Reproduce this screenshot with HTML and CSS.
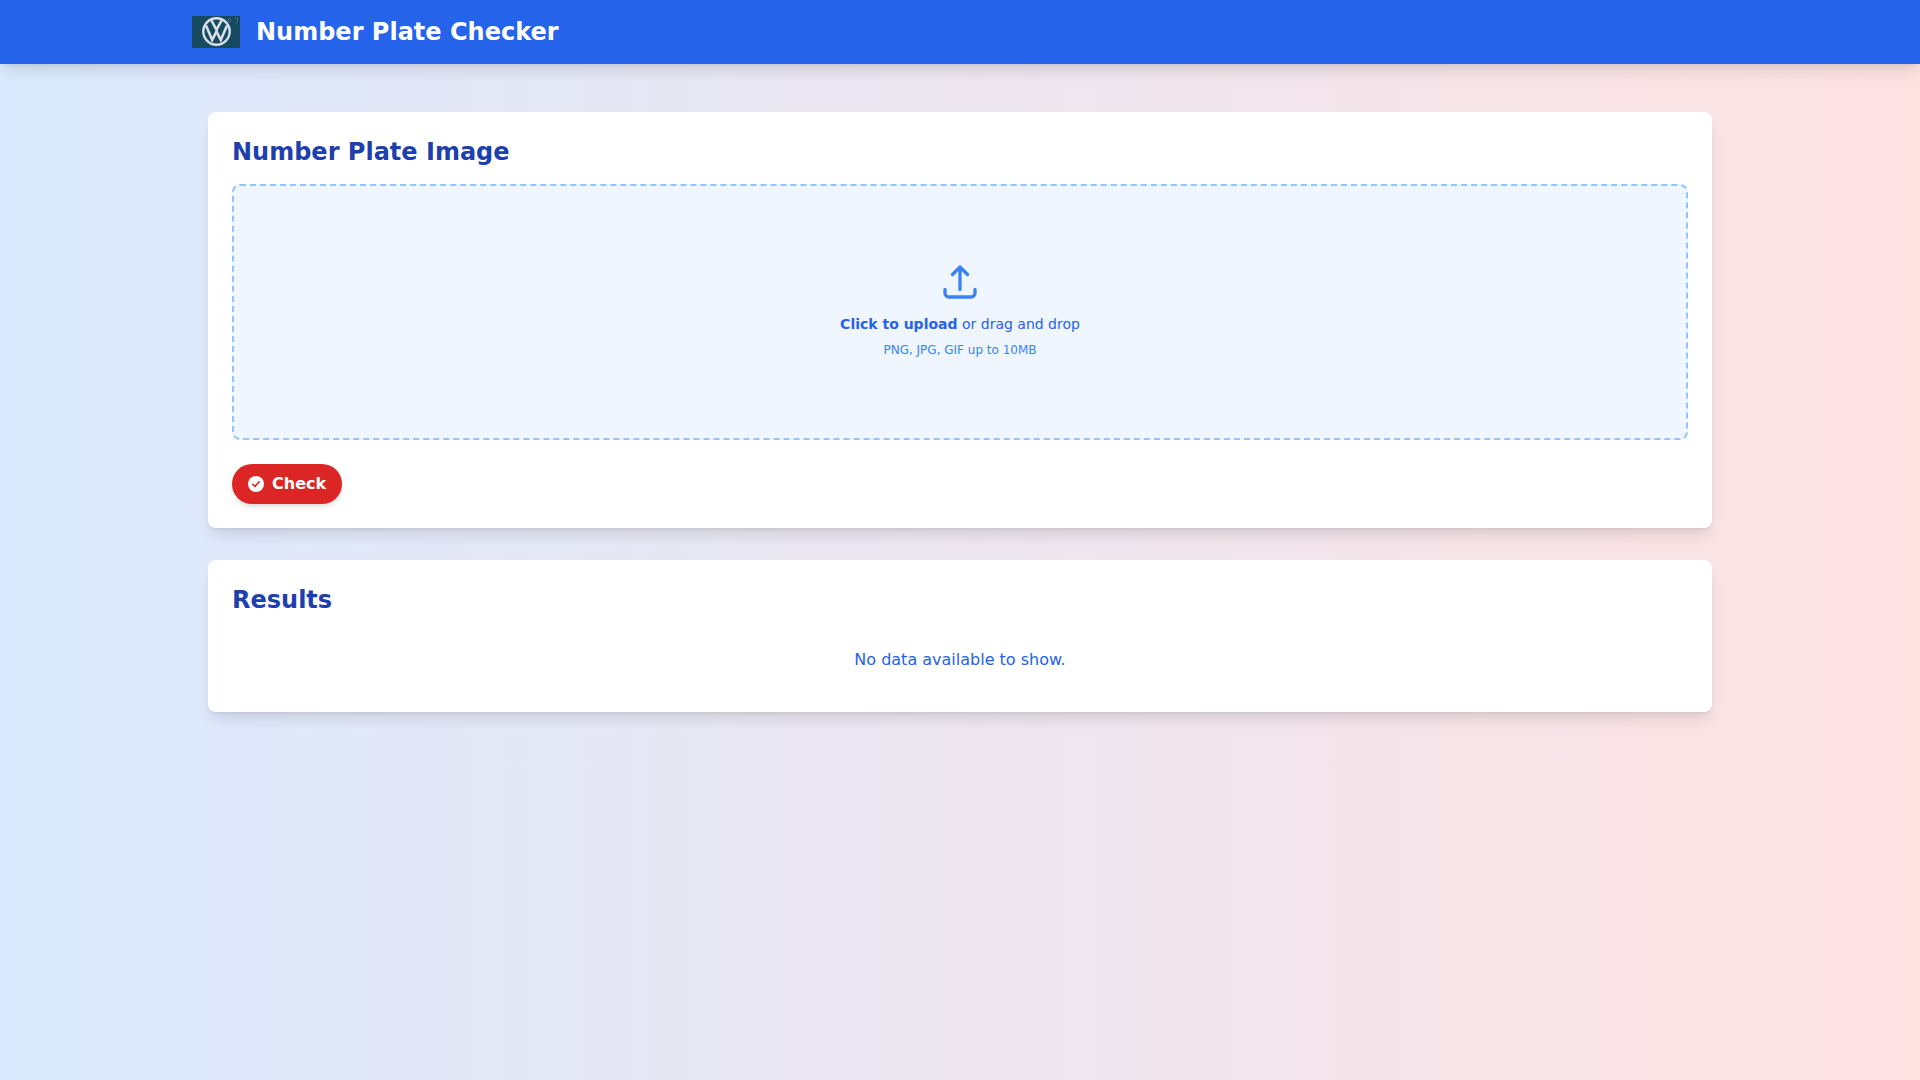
FILE: index.html
```html
<!DOCTYPE html>
<html lang="en">
<head>
<meta charset="utf-8">
<title>Number Plate Checker</title>
<link rel="stylesheet" href="styles.css">
</head>
<body>
<header class="topbar">
  <div class="topbar-inner">
    <svg class="logo" viewBox="0 0 48 32" width="48" height="32" aria-label="VW logo">
      <rect width="48" height="32" fill="#174a5f"/>
      <g fill="none" stroke="#d8dfe9">
        <circle cx="24.5" cy="15.5" r="13.2" stroke-width="2.4"/>
        <path d="M14 9.5 L20.2 24 L24.5 15.5 L28.8 24 L35 9.5" stroke-width="2.6"/>
        <path d="M19.2 4 L24.5 13.8 L29.8 4" stroke-width="2.6"/>
      </g>
      <g fill="#5f8fb0">
        <rect x="36" y="3" width="1" height="1"/>
        <rect x="38" y="3" width="1" height="1"/>
        <rect x="36" y="5" width="1" height="1"/>
        <rect x="38" y="5" width="1" height="1"/>
        <rect x="43" y="2" width="1" height="1"/>
        <rect x="45" y="2" width="1" height="1"/>
        <rect x="45" y="4" width="1" height="1"/>
        <rect x="44" y="6" width="1" height="1"/>
      </g>
    </svg>
    <h1 class="app-title">Number Plate Checker</h1>
  </div>
</header>
<main class="content">
  <section class="card">
    <h2 class="card-title">Number Plate Image</h2>
    <label class="dropzone">
      <svg class="upload-icon" viewBox="0 0 24 24" width="40" height="40" fill="none" stroke="currentColor" stroke-width="2" stroke-linecap="round" stroke-linejoin="round">
        <path d="M3 16.5v2.25A2.25 2.25 0 0 0 5.25 21h13.5A2.25 2.25 0 0 0 21 18.75V16.5m-13.5-9L12 3m0 0l4.5 4.5M12 3v13.5"/>
      </svg>
      <p class="drop-text"><strong>Click to upload</strong> or drag and drop</p>
      <p class="drop-hint">PNG, JPG, GIF up to 10MB</p>
    </label>
    <button class="check-btn" type="button">
      <svg viewBox="0 0 20 20" width="20" height="20" class="check-icon">
        <circle cx="10" cy="10" r="8" fill="currentColor"/>
        <path d="M6.8 10.2 L9 12.4 L13.2 7.8" fill="none" stroke="#dc2626" stroke-width="1.6" stroke-linecap="round" stroke-linejoin="round"/>
      </svg>
      Check
    </button>
  </section>
  <section class="card">
    <h2 class="card-title">Results</h2>
    <p class="empty">No data available to show.</p>
  </section>
</main>
</body>
</html>
```
FILE: styles.css
```css
* { box-sizing: border-box; }
html, body { margin: 0; padding: 0; }
body {
  min-height: 100vh;
  font-family: "DejaVu Sans", sans-serif;
  background: linear-gradient(to right, #dbeafe, #fee2e2);
}
.topbar {
  height: 64px;
  background: #2563eb;
  box-shadow: 0 10px 15px -3px rgba(0,0,0,.1), 0 4px 6px -4px rgba(0,0,0,.1);
}
.topbar-inner {
  width: 1536px;
  height: 100%;
  margin: 0 auto;
  display: flex;
  align-items: center;
  gap: 16px;
}
.logo { display: block; }
.app-title {
  margin: 0;
  font-size: 24px;
  line-height: 32px;
  font-weight: 700;
  color: #fff;
}
.content {
  width: 1536px;
  margin: 0 auto;
  padding: 48px 16px;
  display: flex;
  flex-direction: column;
  gap: 32px;
}
.card {
  background: #fff;
  border-radius: 8px;
  padding: 24px;
  box-shadow: 0 10px 15px -3px rgba(0,0,0,.1), 0 4px 6px -4px rgba(0,0,0,.1);
}
.card-title {
  margin: 0 0 16px;
  font-size: 24px;
  line-height: 32px;
  font-weight: 700;
  color: #1e40af;
}
.dropzone {
  height: 256px;
  display: flex;
  flex-direction: column;
  align-items: center;
  justify-content: center;
  padding: 20px 0 24px;
  background: #eff6ff;
  border: 2px dashed #93c5fd;
  border-radius: 8px;
}
.upload-icon { color: #3b82f6; margin-bottom: 12px; display: block; }
.drop-text {
  margin: 0 0 8px;
  font-size: 14px;
  line-height: 20px;
  color: #2563eb;
}
.drop-text strong { font-weight: 700; }
.drop-hint {
  margin: 0;
  font-size: 12px;
  line-height: 16px;
  color: #3b82f6;
}
.check-btn {
  margin-top: 24px;
  height: 40px;
  padding: 0 16px;
  display: flex;
  align-items: center;
  gap: 8px;
  background: #dc2626;
  color: #fff;
  border: 0;
  border-radius: 9999px;
  font-family: inherit;
  font-size: 16px;
  line-height: 24px;
  font-weight: 700;
  box-shadow: 0 4px 6px -1px rgba(0,0,0,.1), 0 2px 4px -2px rgba(0,0,0,.1);
}
.check-icon { display: block; margin-left: -2px; margin-right: -2px; }
.empty {
  margin: 0;
  padding: 16px 0;
  text-align: center;
  font-size: 16px;
  line-height: 24px;
  color: #2563eb;
}
```
